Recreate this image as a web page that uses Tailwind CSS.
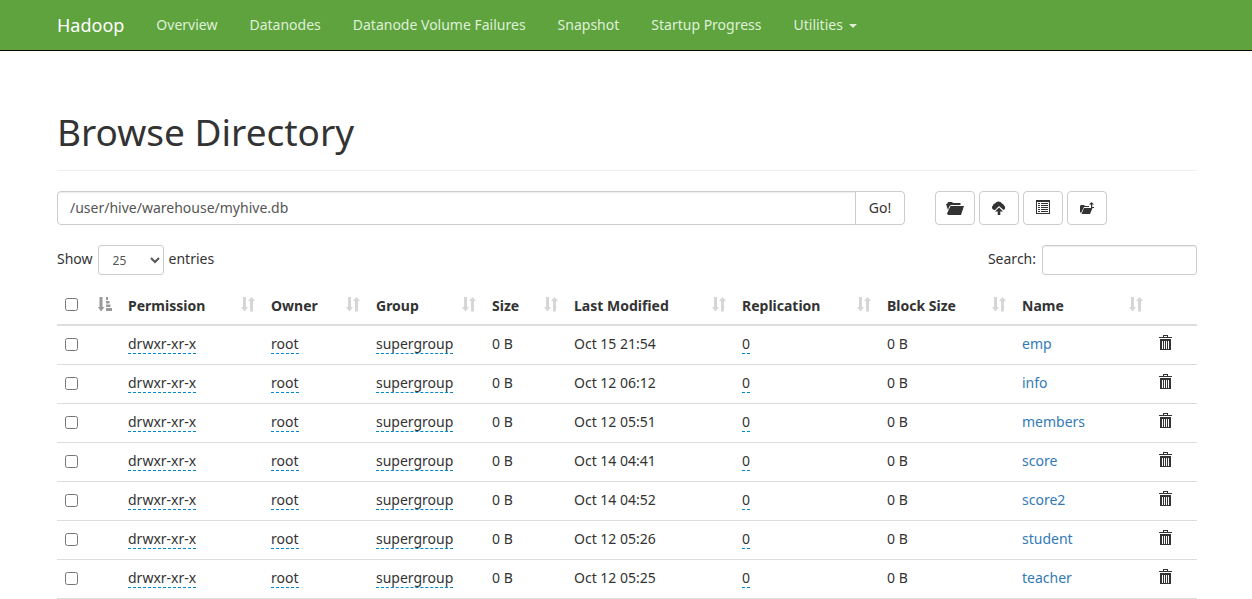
<!DOCTYPE html>
<html lang="en">
<head>
<meta charset="utf-8">
<meta name="viewport" content="width=device-width, initial-scale=1">
<title>Browsing HDFS</title>
<script src="https://cdn.jsdelivr.net/npm/@tailwindcss/browser@4"></script>
</head>
<body class="bg-white font-['Noto_Sans',sans-serif] text-[14px] leading-5 text-[#333]">
<svg class="hidden" aria-hidden="true">
  <symbol id="sort" viewBox="0 0 14 15"><path d="M2 0h3v10h2L3.500 14.500 0 10h2zM9 14.500V4H7l3.500-4L14 4h-2v10.500z"/></symbol>
  <symbol id="sort-asc" viewBox="0 0 14 15"><path d="M1.500 0h3v10h2L3 14.500 0 10h1.500zM8 0h2v3H8zM8 4h3.500v2.500H8zM8 7.500h4.500v2.500H8zM8 11h6v3H8z"/></symbol>
  <symbol id="trash" viewBox="0 0 13 15"><path fill-rule="evenodd" d="M4 0h5v2h4v1H0V2h4zM5 1v1h3V1zM1 4h11v11H1zM3 6v8h1V6zM5 6v8h1V6zM7 6v8h1V6zM9 6v8h1V6z"/></symbol>
</svg>

<nav class="border-b border-[#080808] bg-[#5fa33e]">
  <div class="mx-auto flex h-[50px] max-w-[1142px] items-center gap-8 pl-0.5 text-[#dff0d8]">
    <a href="#" class="text-[18px] text-white">Hadoop</a>
    <a href="#">Overview</a>
    <a href="#">Datanodes</a>
    <a href="#">Datanode Volume Failures</a>
    <a href="#">Snapshot</a>
    <a href="#">Startup Progress</a>
    <a href="#" class="flex items-center gap-1.5">Utilities
      <svg class="mt-0.5 h-1 w-2" viewBox="0 0 8 4" fill="currentColor"><path d="M0 0h8L4 4z"/></svg></a>
  </div>
</nav>

<main class="mx-auto max-w-[1142px] pl-0.5">
  <h1 class="mt-[60px] border-b border-[#eee] pb-[18px] text-[37px] leading-[41px]">Browse Directory</h1>

  <form class="mt-5 flex">
    <input type="text" aria-label="Directory" value="/user/hive/warehouse/myhive.db" class="h-[34px] min-w-0 flex-1 rounded-l border border-[#ccc] px-3 pb-0.5 text-[#555] shadow-[inset_0_1px_1px_rgba(0,0,0,0.075)]">
    <button type="button" class="-ml-px h-[34px] w-[50px] rounded-r border border-[#ccc]">Go!</button>
    <div class="ml-[30px] mr-[90px] flex gap-1">
      <button type="button" aria-label="Create directory" class="flex h-[34px] w-10 items-center justify-center rounded border border-[#ccc]">
        <svg class="h-[13px] w-[18px]" viewBox="0 0 18 13" fill="currentColor"><path d="M0 2h1l1-2h4l1 1h7.500v2H5L3.500 4 2 8zM4.500 4H18l-3 9H2L1 11.500z"/></svg></button>
      <button type="button" aria-label="Upload files" class="flex h-[34px] w-10 items-center justify-center rounded border border-[#ccc]">
        <svg class="h-[14px] w-4" viewBox="0 0 16 14" fill="currentColor"><path d="M4 9H3a2.500 2.500 0 0 1-1-4.500A2 2 0 0 1 4 2.500 4 4 0 0 1 11 2.500a2.500 2.500 0 0 1 2 2A2.500 2.500 0 0 1 12.500 9L8 5zM8 6.500l4 4H9.300V14H6.700v-3.500H4z"/></svg></button>
      <button type="button" aria-label="Cut" class="flex h-[34px] w-10 items-center justify-center rounded border border-[#ccc]">
        <svg class="mb-0.5 h-[14px] w-[14px]" viewBox="0 0 14 14" fill="currentColor"><path fill-rule="evenodd" d="M0 0h14v14H0zM1 2v11h12V2zM2 3h2v1H2zM5 3h7v1H5zM2 5h2v1H2zM5 5h7v1H5zM2 7h2v1H2zM5 7h7v1H5zM2 9h2v1H2zM5 9h7v1H5zM2 11h2v1H2zM5 11h7v1H5z"/></svg></button>
      <button type="button" aria-label="Parent directory" class="flex h-[34px] w-10 items-center justify-center rounded border border-[#ccc]">
        <svg class="h-3 w-[14px]" viewBox="0 0 14 12" fill="currentColor"><path d="M0 4l1-1h3l1 1h4v1H4L2 9l-1 2-1-1zM4 6h8.500L10 12H1.500zM11.500 0L14 2.500h-1.800V5H14v1h-3V2.500H9z"/></svg></button>
    </div>
  </form>

  <div class="mt-5 flex items-center justify-between">
    <label class="flex items-center gap-[5px]"><span class="pb-0.5">Show</span>
      <select class="h-[30px] w-[66px] rounded-[3px] border border-[#ccc] bg-white px-2.5 text-[12px] text-[#555]"><option>25</option></select>
      <span class="pb-0.5">entries</span></label>
    <label class="flex items-center gap-1.5"><span class="pb-0.5">Search:</span>
      <input type="search" class="h-[30px] w-[155px] rounded-[3px] border border-[#ccc] px-2.5 shadow-[inset_0_1px_1px_rgba(0,0,0,0.075)]"></label>
  </div>

  <table class="mt-3 w-full table-fixed border-separate border-spacing-0 text-left">
    <colgroup><col class="w-[63px]"><col class="w-[143px]"><col class="w-[105px]"><col class="w-[116px]"><col class="w-[82px]"><col class="w-[168px]"><col class="w-[145px]"><col class="w-[135px]"><col class="w-[137px]"><col class="w-[46px]"></colgroup>
    <thead id="head"></thead>
    <tbody id="rows"></tbody>
  </table>
</main>

<script>
const th = 'h-[39px] border-b-2 border-[#ddd] px-2 font-bold';
const td = 'h-[39px] border-b border-[#ddd] px-2 pb-0.5';
const box = 'block size-[13px]';
const icon = (id, cls) => `<svg class="${cls}" fill="currentColor"><use href="#${id}"/></svg>`;
document.getElementById('head').innerHTML = `<tr>
  <th class="${th} pb-0.5"><div class="flex items-center justify-between"><input type="checkbox" aria-label="Select all" class="${box}">${icon('sort-asc', 'h-[15px] w-[14px] text-[#999]')}</div></th>` +
  ['Permission', 'Owner', 'Group', 'Size', 'Last Modified', 'Replication', 'Block Size', 'Name'].map(t =>
    `<th class="${th}"><div class="flex items-center justify-between">${t}${icon('sort', 'mb-0.5 h-[15px] w-[14px] text-[#d6d6d6]')}</div></th>`).join('') +
  `<th class="${th}"></th></tr>`;
const dash = t => `<span class="inline-block border-b border-dashed border-[#0088cc] leading-[19px]">${t}</span>`;
document.getElementById('rows').innerHTML = [
  ['emp', 'Oct 15 21:54'], ['info', 'Oct 12 06:12'], ['members', 'Oct 12 05:51'], ['score', 'Oct 14 04:41'],
  ['score2', 'Oct 14 04:52'], ['student', 'Oct 12 05:26'], ['teacher', 'Oct 12 05:25']
].map(([name, date]) => `<tr>
  <td class="${td}"><input type="checkbox" aria-label="Select ${name}" class="${box}"></td>
  <td class="${td}">${dash('drwxr-xr-x')}</td><td class="${td}">${dash('root')}</td><td class="${td}">${dash('supergroup')}</td>
  <td class="${td}">0 B</td><td class="${td}">${date}</td><td class="${td}">${dash('0')}</td><td class="${td}">0 B</td>
  <td class="${td}"><a href="#" class="text-[#337ab7]">${name}</a></td>
  <td class="${td}"><button type="button" aria-label="Delete ${name}" class="block pb-1">${icon('trash', 'h-[15px] w-[13px]')}</button></td></tr>`).join('');
</script>
</body>
</html>
